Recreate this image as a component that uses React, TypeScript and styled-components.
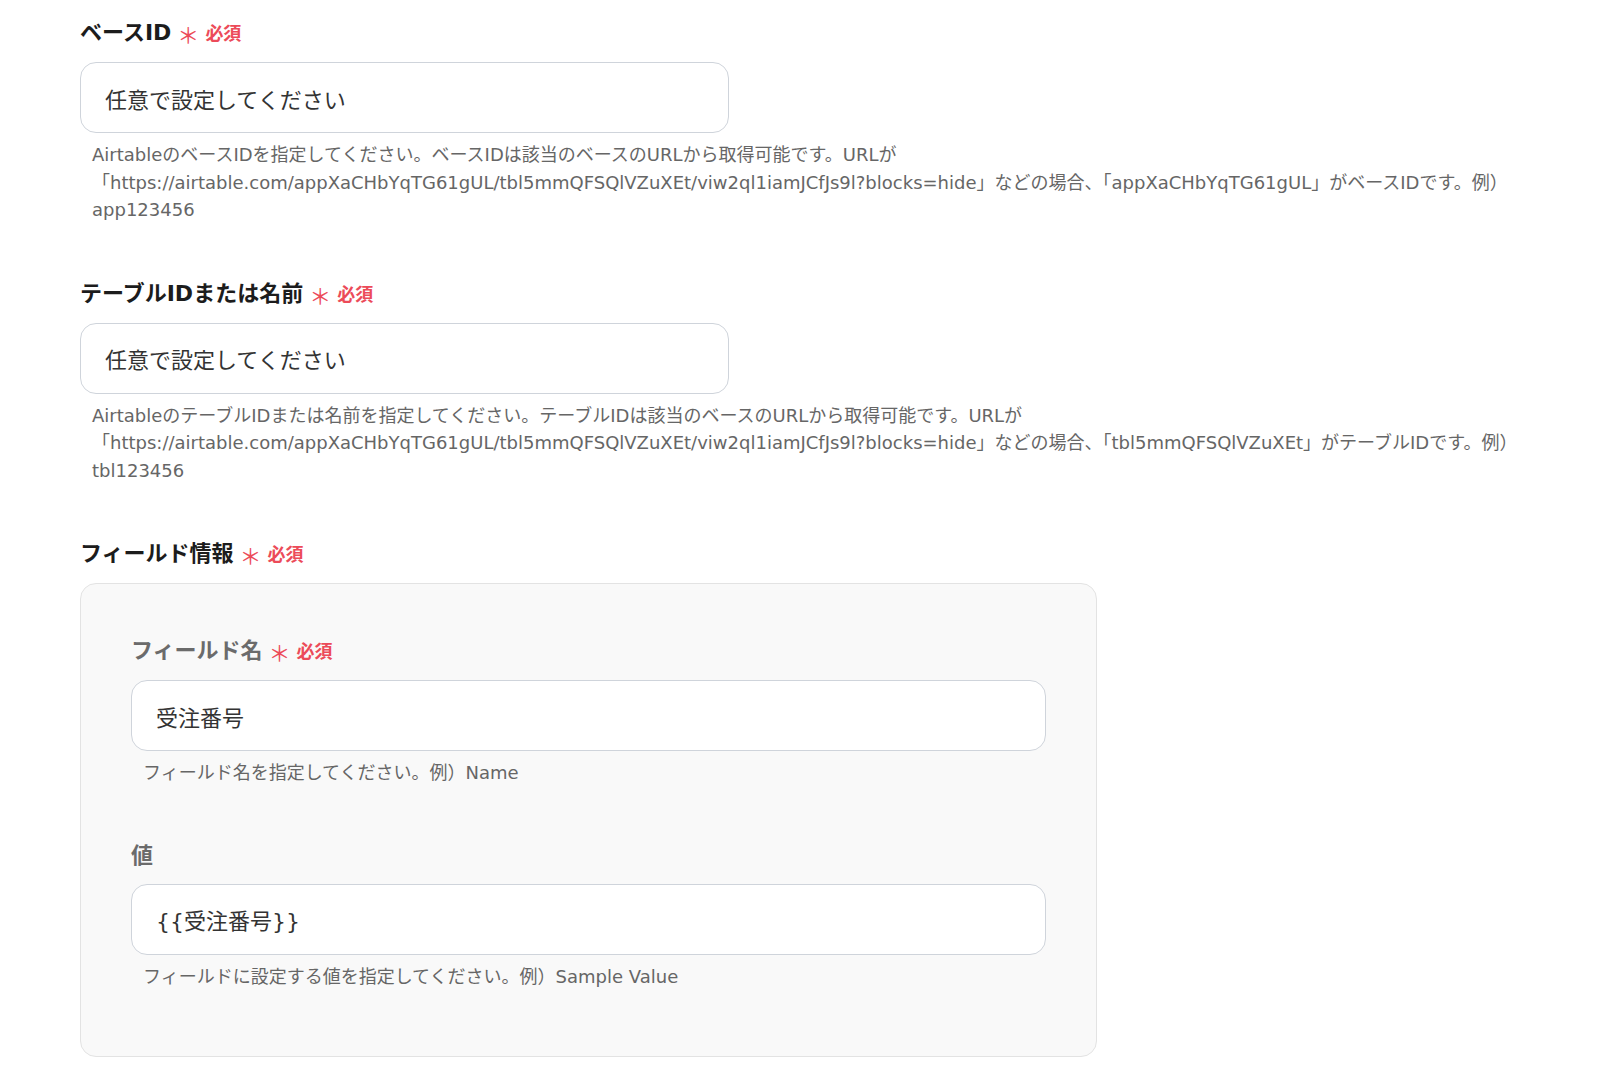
import React from 'react';
import styled, { createGlobalStyle } from 'styled-components';

const GlobalStyle = createGlobalStyle`
  body {
    margin: 0;
    background: #ffffff;
    font-family: "DejaVu Sans", "Noto Sans CJK JP", sans-serif;
  }
`;

const Page = styled.div`
  padding: 14px 40px 20px 80px;
`;

const Section = styled.div`
  margin-bottom: 51px;

  &:last-child {
    margin-bottom: 0;
  }
`;

const InnerField = styled.div`
  & + & {
    margin-top: 52px;
  }
`;

const Label = styled.div<{ $muted?: boolean }>`
  display: flex;
  align-items: baseline;
  font-size: 22px;
  font-weight: 700;
  line-height: 33px;
  color: ${(p) => (p.$muted ? '#6b6b6b' : '#1c1c1c')};
  margin-bottom: 12px;
`;

const Required = styled.span`
  display: inline-flex;
  align-items: baseline;
  margin-left: 6px;
  color: #ec4b59;
  font-size: 18px;
  font-weight: 700;
`;

const Star = styled.span`
  font-family: "Noto Sans CJK JP", sans-serif;
  font-size: 22px;
  font-weight: 400;
  margin-right: 6px;
  position: relative;
  top: 3px;
`;

const Input = styled.input<{ $wide?: boolean }>`
  display: block;
  box-sizing: border-box;
  width: ${(p) => (p.$wide ? '100%' : '649px')};
  height: 71px;
  padding: 0 24px;
  border: 1px solid #cfd4db;
  border-radius: 16px;
  background: #ffffff;
  font-family: inherit;
  font-size: 22px;
  color: #333333;
  outline: none;
`;

const Help = styled.p`
  margin: 8px 0 0;
  padding: 0 12px;
  font-size: 18px;
  line-height: 27.5px;
  color: #666666;
`;

const Card = styled.div`
  box-sizing: border-box;
  width: 1017px;
  padding: 48px 50px 66px;
  background: #f9f9f9;
  border: 1px solid #e3e3e3;
  border-radius: 16px;
`;

const RequiredMark = () => (
  <Required>
    <Star>＊</Star>必須
  </Required>
);

const url =
  'https://airtable.com/appXaCHbYqTG61gUL/tbl5mmQFSQlVZuXEt/viw2ql1iamJCfJs9l?blocks=hide';

export default function App() {
  return (
    <Page>
      <GlobalStyle />
      <Section>
        <Label>
          ベースID
          <RequiredMark />
        </Label>
        <Input defaultValue="任意で設定してください" />
        <Help>
          AirtableのベースIDを指定してください。ベースIDは該当のベースのURLから取得可能です。URLが「{url}」などの場合、「appXaCHbYqTG61gUL」がベースIDです。例）app123456
        </Help>
      </Section>

      <Section>
        <Label>
          テーブルIDまたは名前
          <RequiredMark />
        </Label>
        <Input defaultValue="任意で設定してください" />
        <Help>
          AirtableのテーブルIDまたは名前を指定してください。テーブルIDは該当のベースのURLから取得可能です。URLが「{url}」などの場合、「tbl5mmQFSQlVZuXEt」がテーブルIDです。例）tbl123456
        </Help>
      </Section>

      <Section>
        <Label>
          フィールド情報
          <RequiredMark />
        </Label>
        <Card>
          <InnerField>
            <Label $muted>
              フィールド名
              <RequiredMark />
            </Label>
            <Input $wide defaultValue="受注番号" />
            <Help>フィールド名を指定してください。例）Name</Help>
          </InnerField>
          <InnerField>
            <Label $muted>値</Label>
            <Input $wide defaultValue="{{受注番号}}" />
            <Help>フィールドに設定する値を指定してください。例）Sample Value</Help>
          </InnerField>
        </Card>
      </Section>
    </Page>
  );
}
